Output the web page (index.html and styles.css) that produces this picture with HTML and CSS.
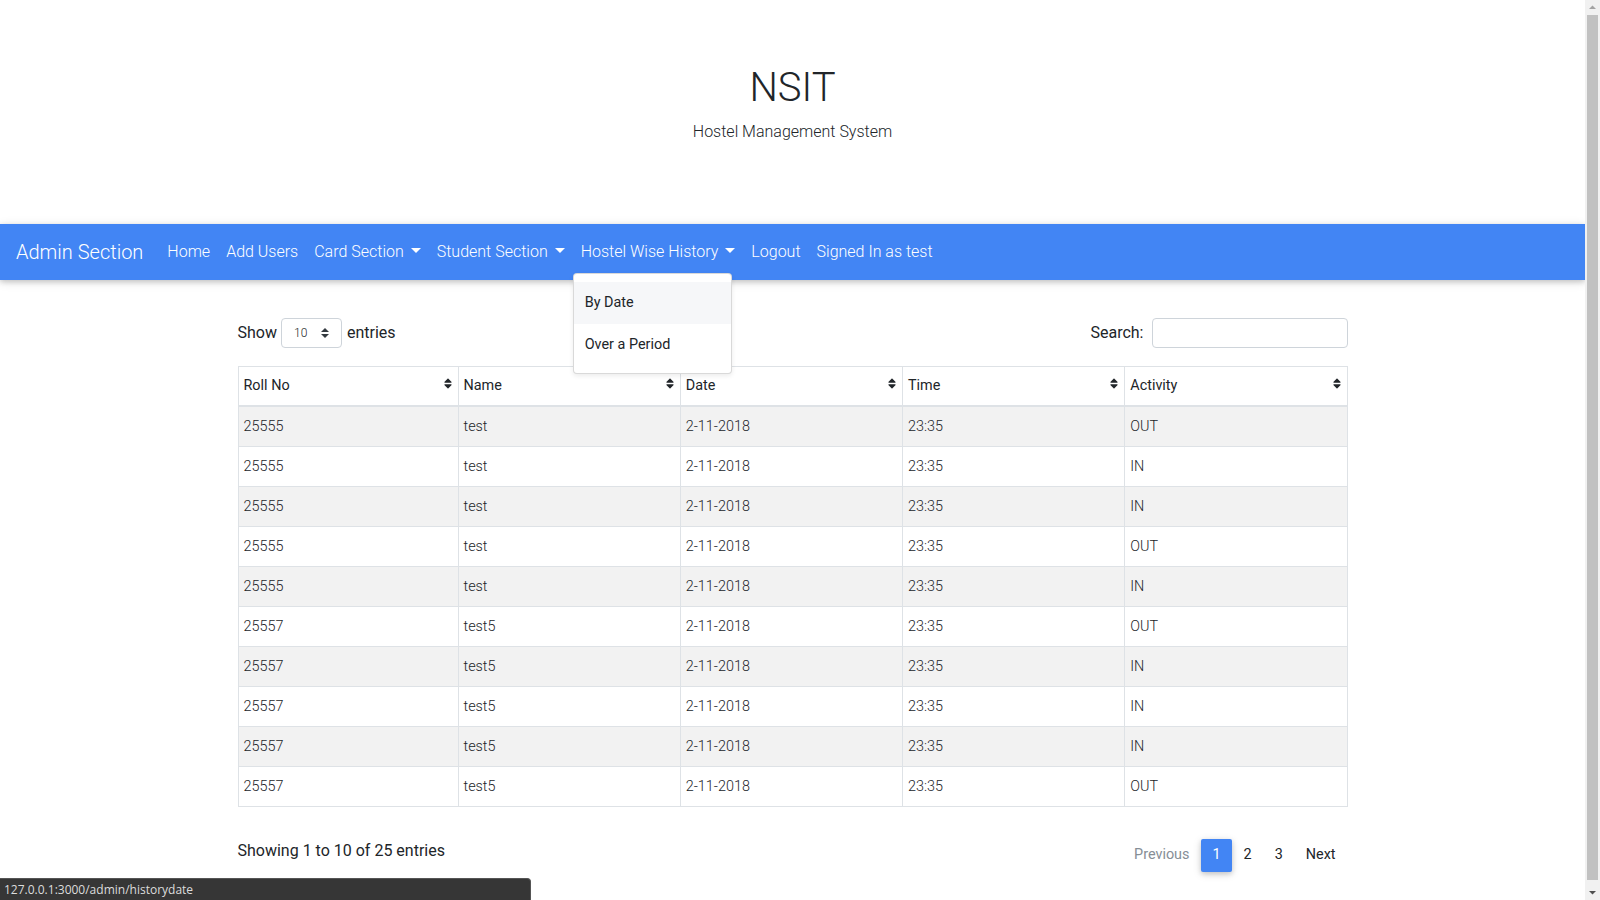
FILE: index.html
```html
<!DOCTYPE html>
<html lang="en">
<head>
<meta charset="utf-8">
<title>Admin - History by Date</title>
<link rel="stylesheet" href="styles.css">
</head>
<body>
<header class="masthead">
  <h1 class="masthead-title">NSIT</h1>
  <p class="masthead-sub">Hostel Management System</p>
</header>

<nav class="navbar">
  <a class="navbar-brand" href="#">Admin Section</a>
  <ul class="nav-list">
    <li class="nav-item"><a class="nav-link" href="#">Home</a></li>
    <li class="nav-item"><a class="nav-link" href="#">Add Users</a></li>
    <li class="nav-item"><a class="nav-link dropdown-toggle" href="#">Card Section</a></li>
    <li class="nav-item"><a class="nav-link dropdown-toggle" href="#">Student Section</a></li>
    <li class="nav-item dropdown">
      <a class="nav-link dropdown-toggle" href="#">Hostel Wise History</a>
      <div class="dropdown-menu">
        <a class="dropdown-item is-hover" href="#">By Date</a>
        <a class="dropdown-item" href="#">Over a Period</a>
      </div>
    </li>
    <li class="nav-item"><a class="nav-link" href="#">Logout</a></li>
    <li class="nav-item"><a class="nav-link" href="#">Signed In as test</a></li>
  </ul>
</nav>

<main class="container">
  <div class="dt-top">
    <label class="dt-length">Show
      <span class="fake-select"><span>10</span>
        <svg class="select-arrows" width="8" height="10" viewBox="0 0 4 5"><path d="M2 0L0 2h4zm0 5L0 3h4z" fill="#343a40"/></svg>
      </span>
      entries</label>
    <label class="dt-search">Search: <input class="search-input" type="search"></label>
  </div>

  <table class="data-table">
    <thead>
      <tr>
        <th class="col-first">Roll No<svg class="sort-icon" viewBox="0 0 320 512"><path d="M41 288h238c21.4 0 32.1 25.9 17 41L177 448c-9.4 9.4-24.6 9.4-33.9 0L24 329c-15.1-15.1-4.4-41 17-41zm255-105L177 64c-9.4-9.4-24.6-9.4-33.9 0L24 183c-15.1 15.1-4.4 41 17 41h238c21.4 0 32.1-25.9 17-41z"/></svg></th>
        <th>Name<svg class="sort-icon" viewBox="0 0 320 512"><path d="M41 288h238c21.4 0 32.1 25.9 17 41L177 448c-9.4 9.4-24.6 9.4-33.9 0L24 329c-15.1-15.1-4.4-41 17-41zm255-105L177 64c-9.4-9.4-24.6-9.4-33.9 0L24 183c-15.1 15.1-4.4 41 17 41h238c21.4 0 32.1-25.9 17-41z"/></svg></th>
        <th>Date<svg class="sort-icon" viewBox="0 0 320 512"><path d="M41 288h238c21.4 0 32.1 25.9 17 41L177 448c-9.4 9.4-24.6 9.4-33.9 0L24 329c-15.1-15.1-4.4-41 17-41zm255-105L177 64c-9.4-9.4-24.6-9.4-33.9 0L24 183c-15.1 15.1-4.4 41 17 41h238c21.4 0 32.1-25.9 17-41z"/></svg></th>
        <th>Time<svg class="sort-icon" viewBox="0 0 320 512"><path d="M41 288h238c21.4 0 32.1 25.9 17 41L177 448c-9.4 9.4-24.6 9.4-33.9 0L24 329c-15.1-15.1-4.4-41 17-41zm255-105L177 64c-9.4-9.4-24.6-9.4-33.9 0L24 183c-15.1 15.1-4.4 41 17 41h238c21.4 0 32.1-25.9 17-41z"/></svg></th>
        <th>Activity<svg class="sort-icon" viewBox="0 0 320 512"><path d="M41 288h238c21.4 0 32.1 25.9 17 41L177 448c-9.4 9.4-24.6 9.4-33.9 0L24 329c-15.1-15.1-4.4-41 17-41zm255-105L177 64c-9.4-9.4-24.6-9.4-33.9 0L24 183c-15.1 15.1-4.4 41 17 41h238c21.4 0 32.1-25.9 17-41z"/></svg></th>
      </tr>
    </thead>
    <tbody>
      <tr><td>25555</td><td>test</td><td>2-11-2018</td><td>23:35</td><td>OUT</td></tr>
      <tr><td>25555</td><td>test</td><td>2-11-2018</td><td>23:35</td><td>IN</td></tr>
      <tr><td>25555</td><td>test</td><td>2-11-2018</td><td>23:35</td><td>IN</td></tr>
      <tr><td>25555</td><td>test</td><td>2-11-2018</td><td>23:35</td><td>OUT</td></tr>
      <tr><td>25555</td><td>test</td><td>2-11-2018</td><td>23:35</td><td>IN</td></tr>
      <tr><td>25557</td><td>test5</td><td>2-11-2018</td><td>23:35</td><td>OUT</td></tr>
      <tr><td>25557</td><td>test5</td><td>2-11-2018</td><td>23:35</td><td>IN</td></tr>
      <tr><td>25557</td><td>test5</td><td>2-11-2018</td><td>23:35</td><td>IN</td></tr>
      <tr><td>25557</td><td>test5</td><td>2-11-2018</td><td>23:35</td><td>IN</td></tr>
      <tr><td>25557</td><td>test5</td><td>2-11-2018</td><td>23:35</td><td>OUT</td></tr>
    </tbody>
  </table>

  <div class="dt-bottom">
    <div class="dt-info">Showing 1 to 10 of 25 entries</div>
    <ul class="pagination">
      <li class="page-item disabled"><a class="page-link" href="#">Previous</a></li>
      <li class="page-item active"><a class="page-link" href="#">1</a></li>
      <li class="page-item"><a class="page-link" href="#">2</a></li>
      <li class="page-item"><a class="page-link" href="#">3</a></li>
      <li class="page-item"><a class="page-link page-next" href="#">Next</a></li>
    </ul>
  </div>
</main>

<div class="status-bubble">127.0.0.1:3000/admin/historydate</div>

<div class="scrollbar" aria-hidden="true">
  <svg class="scroll-arrow" width="15" height="15" viewBox="0 0 15 15"><path d="M4 9h7L7.5 5.5z" fill="#a3a3a3"/></svg>
  <div class="scroll-thumb"></div>
  <svg class="scroll-arrow" width="15" height="15" viewBox="0 0 15 15"><path d="M4 6h7L7.5 9.5z" fill="#505050"/></svg>
</div>
</body>
</html>
```

FILE: styles.css
```css
html, body {
  margin: 0;
  padding: 0;
}
body {
  margin-right: 15px;
  font-family: Roboto, "Liberation Sans", sans-serif;
  font-weight: 300;
  color: #212529;
  background: #fff;
  font-size: 16px;
  line-height: 1.5;
}
a { text-decoration: none; color: inherit; }

/* header */
.masthead {
  height: 224px;
  box-sizing: border-box;
  padding-top: 64px;
  text-align: center;
}
.masthead-title {
  margin: 0;
  font-size: 40px;
  font-weight: 300;
  line-height: 48px;
}
.masthead-sub {
  margin: 8px 0 0;
  font-size: 16px;
  line-height: 24px;
  font-weight: 300;
}

/* navbar */
.navbar {
  display: flex;
  align-items: center;
  height: 56px;
  box-sizing: border-box;
  padding: 8px 16px;
  background: #4285f4;
  color: #fff;
  box-shadow: 0 2px 5px 0 rgba(0,0,0,.16), 0 2px 10px 0 rgba(0,0,0,.12);
  position: relative;
  z-index: 5;
}
.navbar-brand {
  font-size: 20px;
  line-height: 30px;
  padding: 5px 0;
  margin-right: 16px;
  font-weight: 300;
}
.nav-list {
  display: flex;
  list-style: none;
  margin: 0;
  padding: 0;
}
.nav-item { position: relative; }
.nav-link {
  display: block;
  padding: 8px;
  line-height: 24px;
  font-size: 16px;
}
.dropdown-toggle::after {
  content: "";
  display: inline-block;
  margin-left: 7px;
  vertical-align: 4px;
  border-top: 5px solid #fff;
  border-left: 5px solid transparent;
  border-right: 5px solid transparent;
}
.dropdown-menu {
  position: absolute;
  top: 40px;
  left: 0;
  margin-top: 1px;
  width: 159px;
  box-sizing: border-box;
  padding: 8px 0;
  background: #fff;
  border: 1px solid rgba(0,0,0,.15);
  border-radius: 4px;
  box-shadow: 0 2px 5px 0 rgba(0,0,0,.08);
  color: #212529;
}
.dropdown-item {
  display: block;
  padding: 10px 11px;
  font-size: 14.4px;
  line-height: 21.6px;
  font-weight: 400;
}
.dropdown-item.is-hover { background: #f6f7f9; }

/* content */
.container {
  max-width: 1110px;
  margin: 0 auto;
  padding: 38px 15px 40px;
}
.dt-top {
  display: flex;
  justify-content: space-between;
  align-items: center;
  height: 30px;
}
.dt-length, .dt-search {
  display: flex;
  align-items: center;
  font-weight: 400;
  font-size: 16px;
}
.fake-select {
  display: inline-flex;
  align-items: center;
  justify-content: space-between;
  box-sizing: border-box;
  width: 61px;
  height: 30px;
  margin: 0 5px 0 4px;
  padding: 0 12px;
  border: 1px solid #ced4da;
  border-radius: 4px;
  font-size: 12px;
  font-weight: 300;
}
.select-arrows { display: block; }
.search-input {
  box-sizing: border-box;
  width: 196px;
  height: 30px;
  margin-left: 8px;
  border: 1px solid #ced4da;
  border-radius: 4px;
  padding: 4px 8px;
  font: inherit;
  font-size: 14px;
  outline: none;
}

.data-table {
  width: 100%;
  margin-top: 18px;
  border-collapse: collapse;
  table-layout: fixed;
  border: 1px solid #dee2e6;
}
.data-table th, .data-table td {
  border: 1px solid #dee2e6;
  text-align: left;
  font-size: 14.4px;
}
.data-table th {
  position: relative;
  font-weight: 400;
  padding: 8px 5px;
  line-height: 22px;
  border-bottom-width: 2px;
}
.data-table th.col-first { width: 220px; box-sizing: border-box; }
.data-table td {
  padding: 9px 5px;
  line-height: 21px;
}
.data-table tbody tr:nth-child(odd) { background: #f2f2f2; }
.sort-icon {
  position: absolute;
  right: 6px;
  top: 10px;
  width: 8px;
  height: 13px;
  fill: #212529;
}

.dt-bottom {
  display: flex;
  justify-content: space-between;
  align-items: flex-start;
  margin-top: 32px;
}
.dt-info {
  font-weight: 400;
  line-height: 24px;
}
.pagination {
  display: flex;
  list-style: none;
  margin: 0 0 0;
  padding: 0;
}
.page-link {
  display: block;
  padding: 7px 11.5px 8px;
  line-height: 18px;
  font-size: 14.4px;
  font-weight: 400;
  border-radius: 2px;
  color: #212529;
}
.page-next { padding-right: 12px; }
.page-item.disabled .page-link { color: #868e96; }
.page-item.active .page-link {
  background: #4285f4;
  color: #fff;
  box-shadow: 0 2px 5px 0 rgba(0,0,0,.16), 0 2px 10px 0 rgba(0,0,0,.12);
}

/* browser status bubble overlay */
.status-bubble {
  position: fixed;
  left: 0;
  bottom: 0;
  width: 531px;
  height: 22px;
  box-sizing: border-box;
  padding: 0 4px;
  background: #363636;
  border-top: 1px solid #555;
  border-right: 1px solid #555;
  border-top-right-radius: 4px;
  color: #dcdcdc;
  font-family: "Open Sans", "DejaVu Sans", sans-serif;
  font-size: 12px;
  line-height: 21px;
  font-weight: 400;
  z-index: 20;
}

/* browser scrollbar overlay */
.scrollbar {
  position: fixed;
  top: 0;
  right: 0;
  width: 15px;
  height: 100%;
  background: #f1f1f1;
  display: flex;
  flex-direction: column;
  z-index: 30;
}
.scroll-arrow { display: block; flex: none; }
.scroll-thumb {
  flex: 1;
  margin: 0 2px 5px;
  background: #c1c1c1;
}
```
